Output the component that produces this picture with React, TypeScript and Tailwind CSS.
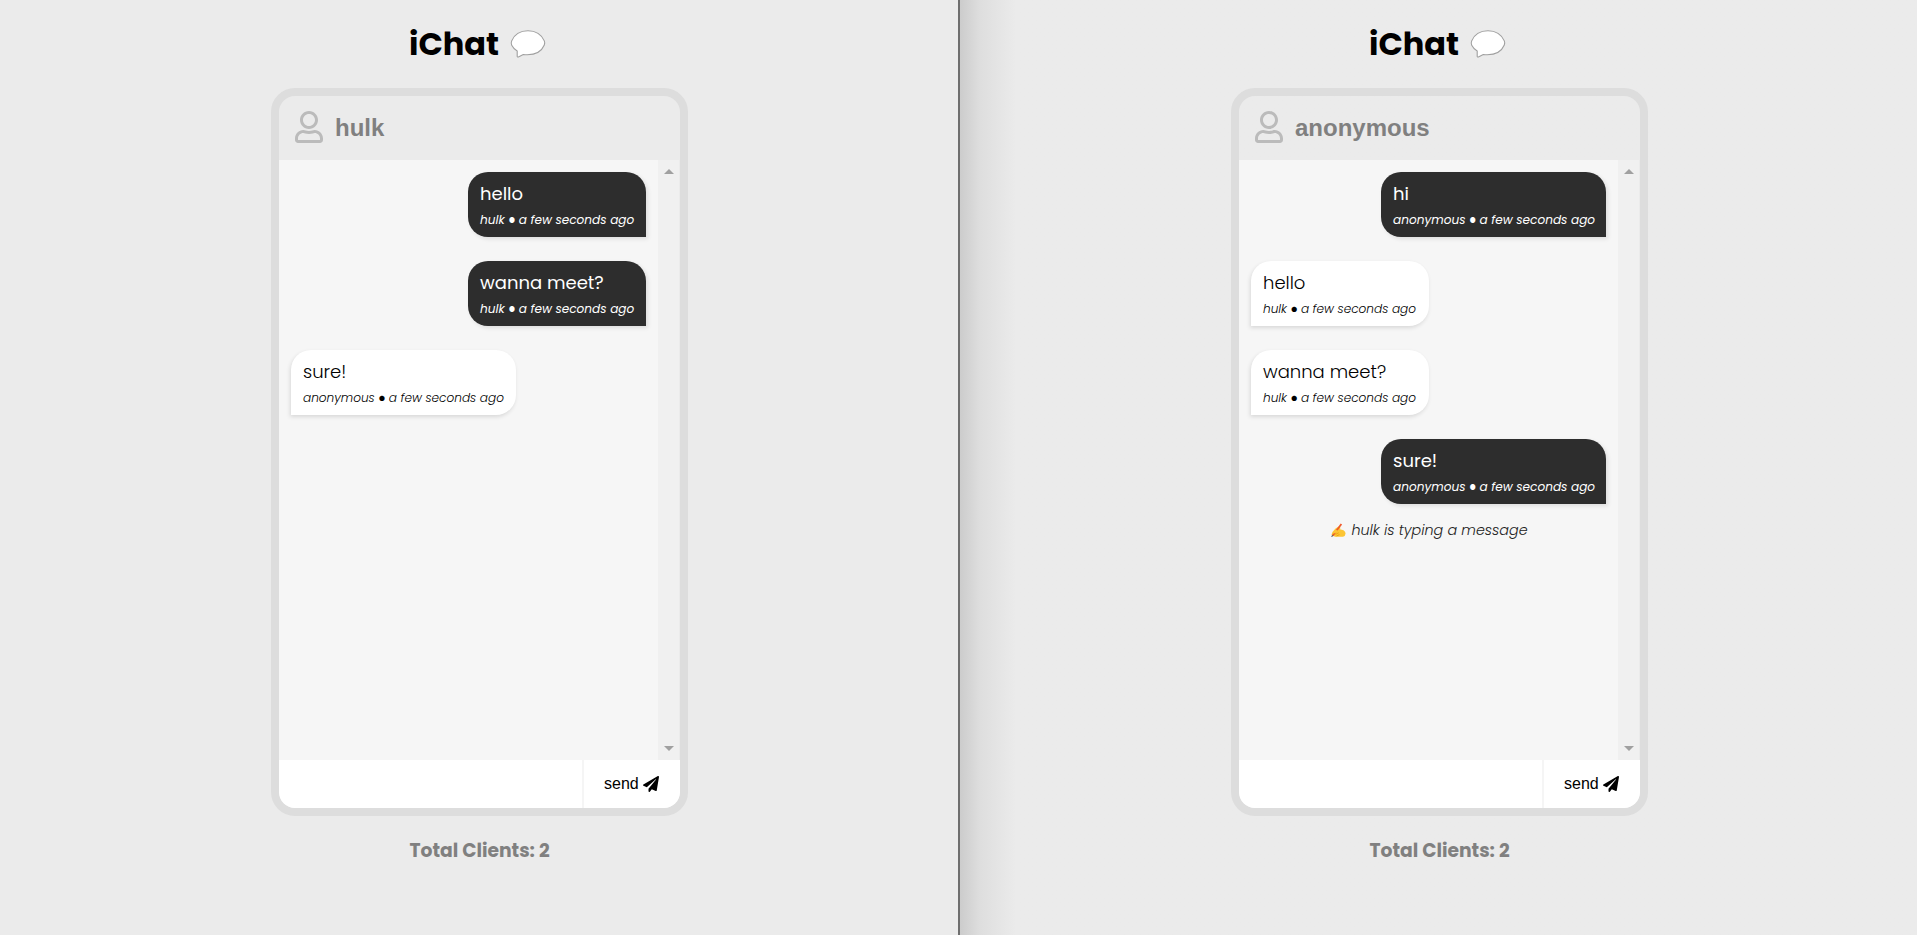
import { FaPaperPlane, FaRegUser } from "react-icons/fa";

type Message = { text: string; author: string; own?: boolean };

function SpeechBalloon() {
  return (
    <svg viewBox="0 0 36 30" className="h-[30px] w-9" fill="#fff" stroke="#a0a0a0" strokeWidth="1.1" strokeLinejoin="round">
      <path d="M18 1.700C10 1.700 4.300 5.500 1.700 11.900C1 13.600 1 14.800 1.700 16.200C3 18.700 4.800 20.500 7.200 21.900V27.300C7.200 28.100 7.700 28.200 8.400 27.900L13.300 25.500C23.500 26.500 31.300 23.200 34.300 16C35 14.300 34.900 13.300 34.300 11.900C31.500 5.500 26 1.700 18 1.700Z" />
    </svg>
  );
}

function WritingHand() {
  return (
    <svg viewBox="0 0 16 16" className="size-4">
      <path d="M2.500 10L5.500 6.500L9 4.200Q10.700 4.600 10.300 6.500L10 7.300L13.500 8.300Q15.500 9.500 15.600 11.500Q15.300 14.300 13 14.800H5L1.500 12.700Z" fill="#fcc534" />
      <path d="M5.500 12.400L8.700 10.800M6.500 14L9.500 12.600" stroke="#e59600" strokeWidth=".7" />
      <path d="M2.200 13.100L10.700 1.400L12.100 2.400L3.600 13.900Z" fill="#f0592b" />
      <path d="M4.300 8.300Q6.500 7.500 8 8.700Q7.600 10.400 5.500 11L3 11.800Z" fill="#fcc534" />
      <path d="M1.200 15L2.100 13L3.500 14Z" fill="#444" />
    </svg>
  );
}

function Bubble({ text, author, own }: Message) {
  const side = own
    ? "self-end rounded-br-none bg-[#2d2d2d] text-white shadow-[2px_2px_4px_rgba(0,0,0,0.1)]"
    : "self-start rounded-bl-none bg-white text-black font-light shadow-[-1px_2px_4px_rgba(0,0,0,0.12)]";
  const width = author === "hulk" ? "w-[178px]" : "w-[225px]";
  return (
    <div className={`h-[65px] rounded-[20px] px-3 pt-[7px] whitespace-nowrap ${side} ${width}`}>
      <div className="text-lg leading-[30px]">{text}</div>
      <div className="flex h-[22px] items-center gap-[3px] text-[12.100px] leading-[22px] italic">
        {author}
        <span className="mx-px mt-0.5 size-1.5 overflow-visible text-center text-[7px] leading-[6px] not-italic">●</span>
        a few seconds ago
      </div>
    </div>
  );
}

function Chat({ name, messages, typing }: { name: string; messages: Message[]; typing?: string }) {
  return (
    <main className="flex flex-col items-center">
      <h1 className="flex h-[88px] items-start gap-[11px] pt-6 pr-1 text-[32px] leading-10 font-bold text-black">
        iChat <span className="pt-[5px]"><SpeechBalloon /></span>
      </h1>
      <section className="flex h-[728px] w-[417px] flex-col overflow-hidden rounded-[24px] border-8 border-[#ddd]">
        <header className="flex h-16 shrink-0 items-center gap-3 pl-4 font-['Liberation_Sans',Arial,sans-serif] text-2xl font-bold text-[#808080]">
          <FaRegUser className="-mt-0.5 h-8 w-7 text-[#bbb]" />
          {name}
        </header>
        <div className="flex h-[600px] shrink-0 bg-[#f6f6f6]">
          <div className="flex grow flex-col gap-6 p-3">
            {messages.map((m) => <Bubble key={m.text} {...m} />)}
            {typing && (
              <div className="-mt-2 flex items-center justify-center gap-[5px] pl-px text-[14.300px] leading-5 font-light text-[#222] italic">
                <WritingHand />
                {typing} is typing a message
              </div>
            )}
          </div>
          <div className="flex w-[21px] flex-col items-center justify-between bg-[#f0f0f0] py-[9px]">
            <svg viewBox="0 0 10 5" className="h-[5px] w-2.5" fill="#a0a0a0"><path d="M0 5L5 0L10 5Z" /></svg>
            <svg viewBox="0 0 10 5" className="h-[5px] w-2.5" fill="#a0a0a0"><path d="M0 0L5 5L10 0Z" /></svg>
          </div>
          <div className="w-px bg-[#ebebeb]" />
        </div>
        <footer className="flex h-12 shrink-0 bg-white">
          <div className="grow border-r-2 border-[#f5f5f5]" />
          <button className="flex w-24 items-center gap-1 pl-5 font-['Liberation_Sans',Arial,sans-serif] text-base">
            send <FaPaperPlane className="size-4" />
          </button>
        </footer>
      </section>
      <p className="pt-[21px] text-[18.720px] leading-7 font-bold text-[#808080]">Total Clients: 2</p>
    </main>
  );
}

export default function App() {
  return (
    <div className="flex h-[935px] w-[1917px] overflow-hidden bg-[#ebebeb] font-['Poppins','Inter',sans-serif]">
      <div className="w-[958px] pl-px">
        <Chat
          name="hulk"
          messages={[
            { text: "hello", author: "hulk", own: true },
            { text: "wanna meet?", author: "hulk", own: true },
            { text: "sure!", author: "anonymous" },
          ]}
        />
      </div>
      <div className="w-0.5 bg-[#6e6e6e]" />
      <div className="w-[957px] bg-linear-to-r from-[#cccccc] via-[#dedede] via-[20px] to-[#ebebeb] to-[56px] pl-0.5">
        <Chat
          name="anonymous"
          typing="hulk"
          messages={[
            { text: "hi", author: "anonymous", own: true },
            { text: "hello", author: "hulk" },
            { text: "wanna meet?", author: "hulk" },
            { text: "sure!", author: "anonymous", own: true },
          ]}
        />
      </div>
    </div>
  );
}
